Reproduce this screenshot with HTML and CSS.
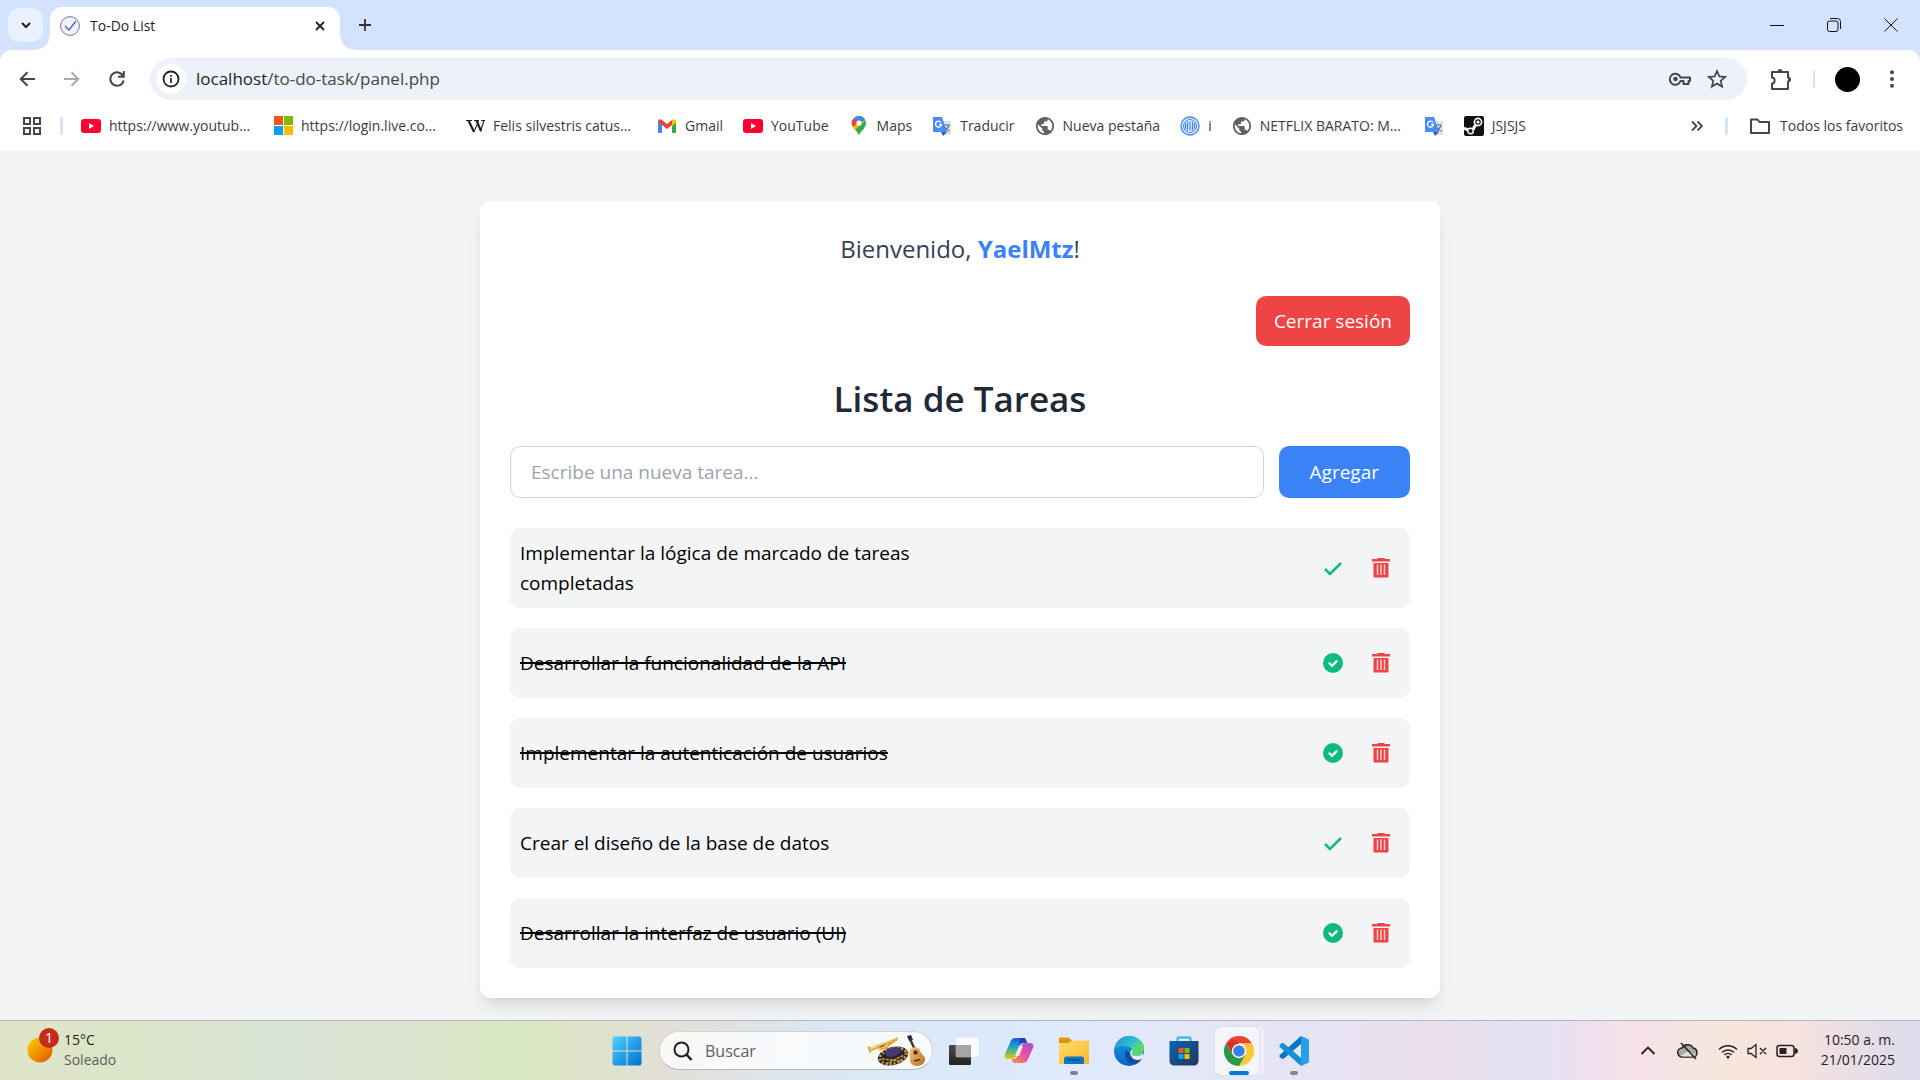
FILE: index.html
```html
<!DOCTYPE html>
<html lang="es">
<head>
<meta charset="utf-8">
<meta name="viewport" content="width=device-width, initial-scale=1">
<title>To-Do List</title>
<link rel="stylesheet" href="styles.css">
</head>
<body>
<svg class="defs" width="0" height="0" aria-hidden="true">
  <defs>
    <linearGradient id="g-sun" x1="0" y1="0" x2="1" y2="1"><stop offset="0" stop-color="#ffd400"/><stop offset="1" stop-color="#e04f00"/></linearGradient>
    <linearGradient id="g-win" x1="0" y1="0" x2="1" y2="1"><stop offset="0" stop-color="#4cd2fe"/><stop offset="1" stop-color="#0070d0"/></linearGradient>
    <linearGradient id="g-dark" x1="0" y1="0" x2="0" y2="1"><stop offset="0" stop-color="#4a4a4a"/><stop offset="1" stop-color="#222"/></linearGradient>
    <linearGradient id="g-cop-a" x1="0" y1="0" x2="0" y2="1"><stop offset="0" stop-color="#1a5be0"/><stop offset=".35" stop-color="#1597dd"/><stop offset=".7" stop-color="#6fbf5a"/><stop offset="1" stop-color="#f2c61c"/></linearGradient>
    <linearGradient id="g-cop-b" x1="1" y1="0" x2="0" y2="1"><stop offset="0" stop-color="#a04ee8"/><stop offset=".5" stop-color="#e8549a"/><stop offset="1" stop-color="#fb8f45"/></linearGradient>
    <linearGradient id="g-fold" x1="0" y1="0" x2="1" y2="1"><stop offset="0" stop-color="#ffdc6e"/><stop offset="1" stop-color="#fbb929"/></linearGradient>
    <linearGradient id="g-edge-a" x1="0" y1=".2" x2="1" y2=".8"><stop offset="0" stop-color="#2795d8"/><stop offset=".5" stop-color="#30c0cf"/><stop offset="1" stop-color="#6ce650"/></linearGradient>
    <linearGradient id="g-edge-b" x1="0" y1="0" x2="0" y2="1"><stop offset="0" stop-color="#1b9de2"/><stop offset="1" stop-color="#0b63c4"/></linearGradient>
    <linearGradient id="g-store" x1="0" y1="0" x2="1" y2="1"><stop offset="0" stop-color="#0b64b5"/><stop offset="1" stop-color="#223659"/></linearGradient>
    <linearGradient id="g-gold" x1="0" y1="0" x2="1" y2="1"><stop offset="0" stop-color="#f6cf7a"/><stop offset="1" stop-color="#b9691f"/></linearGradient>
    <symbol id="i-youtube" viewBox="0 0 20 20"><rect y="3" width="20" height="14" rx="3" fill="#ff0033"/><path d="M8 7l5 3-5 3z" fill="#fff"/></symbol>
    <symbol id="i-globe" viewBox="1 1 22 22"><path fill="#5f6368" d="M12 2C6.480 2 2 6.480 2 12s4.480 10 10 10 10-4.480 10-10S17.520 2 12 2zm-1 17.930c-3.950-.490-7-3.850-7-7.930 0-.620.080-1.210.210-1.790L9 15v1c0 1.100.900 2 2 2v1.930zm6.900-2.540c-.260-.810-1-1.390-1.900-1.390h-1v-3c0-.550-.450-1-1-1H8v-2h2c.550 0 1-.450 1-1V7h2c1.100 0 2-.900 2-2v-.410c2.930 1.190 5 4.060 5 7.410 0 2.080-.800 3.970-2.100 5.390z"/></symbol>
    <symbol id="i-translate" viewBox="0 0 20 20"><path d="M8 5h11v14H11z" fill="#dfe3e8"/><path d="M11 9h7M14.500 8v1M17 9c-1 4-3 5-5 6M13 11c1 2 3 4 5 4" stroke="#607d8b" stroke-width="1.200" fill="none"/><path d="M1 1h9l5 15H2a1 1 0 0 1-1-1z" fill="#4c8bf5"/><path d="M9 16h6l-4 4z" fill="#3957b8"/><path d="M9 6.500A3 3 0 1 0 9.500 8.500H7" stroke="#fff" stroke-width="1.300" fill="none"/></symbol>
    <symbol id="i-check" viewBox="0 0 20 20"><path d="M2 11l5 5L18 5" fill="none" stroke="#10b981" stroke-width="2.600"/></symbol>
    <symbol id="i-done" viewBox="0 0 20 20"><circle cx="10" cy="10" r="10" fill="#10b981"/><path d="M5.800 9.800l3.200 3 5.200-5.200" fill="none" stroke="#fff" stroke-width="2.200"/></symbol>
    <symbol id="i-trash" viewBox="0 0 20 20"><path d="M7 0h6l1 1h5v2.500H1V1h5zM2.500 5h15v13.500a1 1 0 0 1-1 1h-13a1 1 0 0 1-1-1z" fill="#ef4444"/><path d="M6.500 6.500v10.500M10 6.500v10.500M13.500 6.500v10.500" stroke="#f8d5d8" stroke-width="1.400"/></symbol>
  </defs>
</svg>

<header class="browser">
  <div class="tabstrip">
    <button class="tab-search" aria-label="Buscar pestañas"><svg width="12" height="12" viewBox="0 0 12 12"><path d="M2 4l4 4 4-4" fill="none" stroke="#1f1f1f" stroke-width="2"/></svg></button>
    <div class="tab">
      <svg width="20" height="20" viewBox="0 0 20 20"><circle cx="10" cy="10" r="9.400" fill="#f1f2fc" stroke="#77798a" stroke-width="1"/><path d="M5 10l4 4 7-9" fill="none" stroke="#5261b5" stroke-width="1.400"/></svg>
      <span class="tab-title">To-Do List</span>
      <button class="icon-btn" aria-label="Cerrar pestaña"><svg width="12" height="12" viewBox="0 0 12 12"><path d="M2 2l8 8M10 2l-8 8" stroke="#1f1f1f" stroke-width="1.800"/></svg></button>
    </div>
    <button class="icon-btn new-tab" aria-label="Nueva pestaña"><svg width="14" height="14" viewBox="0 0 14 14"><path d="M7 1v12M1 7h12" stroke="#333" stroke-width="1.800"/></svg></button>
    <div class="window-controls">
      <button class="win-btn" aria-label="Minimizar"><svg width="14" height="14" viewBox="0 0 14 14"><path d="M0 7.500h14" stroke="#111"/></svg></button>
      <button class="win-btn" aria-label="Restaurar"><svg width="14" height="14" viewBox="0 0 14 14" fill="none" stroke="#111"><rect x=".5" y="3" width="10.500" height="10.500" rx="2"/><path d="M3 .5h7.500a3 3 0 0 1 3 3V11"/></svg></button>
      <button class="win-btn" aria-label="Cerrar"><svg width="14" height="14" viewBox="0 0 14 14"><path d="M.5.5l13 13M13.500.5l-13 13" stroke="#111"/></svg></button>
    </div>
  </div>

  <div class="toolbar">
    <button class="nav-btn" aria-label="Atrás"><svg width="16" height="16" viewBox="0 0 16 16" fill="none" stroke="#444746" stroke-width="2"><path d="M16 8H2M8.500 1.200L1.700 8l6.800 6.800"/></svg></button>
    <button class="nav-btn" aria-label="Adelante"><svg width="16" height="16" viewBox="0 0 16 16" fill="none" stroke="#aaa" stroke-width="2"><path d="M0 8h14M7.500 1.200L14.300 8l-6.800 6.800"/></svg></button>
    <button class="nav-btn" aria-label="Recargar"><svg width="16" height="16" viewBox="0 0 16 16" fill="none" stroke="#444746" stroke-width="2"><path d="M14 5a6.700 6.700 0 1 0 .6 4.500M14.800 0v5.700H9"/></svg></button>
    <div class="omnibox">
      <button class="site-info" aria-label="Información del sitio"><svg width="18" height="18" viewBox="0 0 18 18"><circle cx="9" cy="9" r="7.500" fill="none" stroke="#1f1f1f" stroke-width="1.800"/><path d="M9 8v5M9 5v1.700" stroke="#1f1f1f" stroke-width="1.700"/></svg></button>
      <div class="url"><span class="url-host">localhost</span>/to-do-task/panel.php</div>
      <button class="icon-btn" aria-label="Contraseñas"><svg width="24" height="16" viewBox="0 0 24 16" fill="none" stroke="#444746" stroke-width="2"><path d="M12.500 6.500H22v3.500h-1.500V13h-5v-3h-3a5.500 5.500 0 1 1 0-3.500z" stroke-linejoin="round"/><circle cx="7.500" cy="8" r="2.300" fill="#444746" stroke="none"/></svg></button>
      <button class="icon-btn" aria-label="Añadir a favoritos"><svg width="20" height="20" viewBox="0 0 20 20"><path d="M10 2l2.300 5.400 5.900.5-4.500 3.900 1.400 5.800L10 14.500l-5.100 3.100 1.400-5.800L1.800 7.900l5.900-.5z" fill="none" stroke="#444746" stroke-width="1.700"/></svg></button>
    </div>
    <button class="icon-btn" aria-label="Extensiones"><svg width="24" height="24" viewBox="0 0 24 24"><path d="M3 5h16v5.500c2 0 2 4 0 4V22H3v-5.500c3.500 0 3.500-6 0-6z" fill="none" stroke="#444746" stroke-width="2" stroke-linejoin="round"/><path d="M8.500 5a2.500 3 0 0 1 5 0zM19 10a3 2.500 0 0 1 0 5z" fill="#444746"/></svg></button>
    <span class="divider"></span>
    <button class="avatar" aria-label="Perfil"></button>
    <button class="icon-btn menu-dots" aria-label="Menú"><svg width="6" height="18" viewBox="0 0 6 18" fill="#444746"><circle cx="3" cy="2.300" r="2"/><circle cx="3" cy="9" r="2"/><circle cx="3" cy="15.700" r="2"/></svg></button>
  </div>

  <nav class="bookmarks" aria-label="Favoritos">
    <button class="icon-btn" aria-label="Aplicaciones"><svg width="20" height="20" viewBox="0 0 20 20" fill="none" stroke="#444746" stroke-width="2"><path d="M2 2h6v6H2zM12 2h6v6h-6zM2 12h6v6H2zM12 12h6v6h-6z"/></svg></button>
    <span class="divider"></span>
    <a class="bookmark" href="#"><svg width="20" height="20"><use href="#i-youtube"/></svg><span class="label-long">https://www.youtub...</span></a>
    <a class="bookmark" href="#"><svg width="20" height="20" viewBox="0 0 20 20"><path d="M1 0h9v9H1z" fill="#f65314"/><path d="M11 0h9v9h-9z" fill="#7cbb00"/><path d="M1 10h9v9H1z" fill="#00a1f1"/><path d="M11 10h9v9h-9z" fill="#ffbb00"/></svg><span class="label-long">https://login.live.co...</span></a>
    <a class="bookmark" href="#"><svg width="20" height="20" viewBox="0 0 20 20" fill="none" stroke="#222"><path d="M3.500 4.500L9 16M11.500 4.500L16 15" stroke-width="2.200"/><path d="M9 15.500l4.500-10M15.500 15.500l3.500-11M1 4.500h6M9 4.500h5M16 4.500h4" stroke-width="1.100"/></svg><span class="label-long">Felis silvestris catus...</span></a>
    <a class="bookmark" href="#"><svg width="20" height="20" viewBox="0 0 20 20"><path d="M1 6v10a1 1 0 0 0 1 1h3V8z" fill="#4285f4"/><path d="M19 6v10a1 1 0 0 1-1 1h-3V8z" fill="#34a853"/><path d="M1 5.500C1 3 3.500 2.500 5 4l5 4 5-4v5l-5 4-5-4-4-3z" fill="#ea4335"/><path d="M15 4c1.500-1.500 4-1 4 1.500V7l-4 3z" fill="#fbbc04"/></svg>Gmail</a>
    <a class="bookmark" href="#"><svg width="20" height="20"><use href="#i-youtube"/></svg>YouTube</a>
    <a class="bookmark" href="#"><svg width="20" height="20" viewBox="0 0 20 20"><path d="M10 20c-.7-5-7-7-7-13a7 7 0 0 1 14 0c0 6-6.300 8-7 13z" fill="#34a853"/><path d="M4.600 2.500A7 7 0 0 1 15.400 2.500L10 7z" fill="#4285f4"/><path d="M4.600 2.500A7 7 0 0 0 4 11l6-4z" fill="#ea4335"/><path d="M4 10.500c.7 1.400 1.500 2.200 2.300 3.200L16.500 4 10 7z" fill="#fbbc04"/><circle cx="10" cy="7" r="2.600" fill="#fff"/></svg>Maps</a>
    <a class="bookmark" href="#"><svg width="20" height="20"><use href="#i-translate"/></svg>Traducir</a>
    <a class="bookmark" href="#"><svg width="20" height="20"><use href="#i-globe"/></svg>Nueva pestaña</a>
    <a class="bookmark" href="#"><svg width="20" height="20" viewBox="0 0 20 20" fill="none" stroke="#3b82f6"><circle cx="10" cy="10" r="9" fill="#e3eefe" stroke-width="1.300"/><circle cx="10" cy="10" r="6.500"/><path d="M7.500 5.500v9M10 5.500v9M12.500 5.500v9M5.500 7v6M14.500 7v6" stroke-width="1.200"/></svg>i</a>
    <a class="bookmark" href="#"><svg width="20" height="20"><use href="#i-globe"/></svg><span class="label-long">NETFLIX BARATO: M...</span></a>
    <a class="bookmark" href="#" aria-label="Traductor"><svg width="20" height="20"><use href="#i-translate"/></svg></a>
    <a class="bookmark" href="#"><svg width="20" height="20" viewBox="0 0 20 20"><rect width="20" height="20" rx="2" fill="#111"/><circle cx="14" cy="6" r="3.600" fill="none" stroke="#fff" stroke-width="1.600"/><circle cx="14" cy="6" r="1.600" fill="#fff"/><path d="M11.500 9L9 13.500M0 12l6 3" stroke="#fff" stroke-width="3"/><circle cx="6.500" cy="15" r="2.800" fill="#111" stroke="#fff" stroke-width="1.400"/></svg>JSJSJS</a>
    <div class="bookmarks-end">
      <button class="icon-btn" aria-label="Más favoritos"><svg width="12" height="12" viewBox="0 0 12 12" fill="none" stroke="#444746" stroke-width="1.800"><path d="M1 1.500L5.500 6 1 10.500M6.500 1.500L11 6l-4.500 4.500"/></svg></button>
      <span class="divider"></span>
      <a class="bookmark all-bookmarks" href="#"><svg width="20" height="20" viewBox="0 0 20 20"><path d="M1 3.500h6.500l2 2.500H19v11H1z" fill="none" stroke="#444746" stroke-width="2" stroke-linejoin="round"/></svg>Todos los favoritos</a>
    </div>
  </nav>
</header>

<main class="page">
  <section class="card">
    <p class="welcome">Bienvenido, <strong class="user">YaelMtz</strong>!</p>
    <div class="session"><button class="btn btn-danger">Cerrar sesión</button></div>
    <h1 class="title">Lista de Tareas</h1>
    <form class="new-task">
      <input class="task-input" type="text" placeholder="Escribe una nueva tarea..." aria-label="Nueva tarea">
      <button class="btn btn-primary" type="button">Agregar</button>
    </form>
    <ul class="tasks">
      <li class="task">
        <span class="task-text">Implementar la lógica de marcado de tareas completadas</span>
        <button class="task-btn" aria-label="Completar"><svg width="20" height="20"><use href="#i-check"/></svg></button>
        <button class="task-btn" aria-label="Eliminar"><svg width="20" height="20"><use href="#i-trash"/></svg></button>
      </li>
      <li class="task">
        <span class="task-text is-done">Desarrollar la funcionalidad de la API</span>
        <button class="task-btn" aria-label="Desmarcar"><svg width="20" height="20"><use href="#i-done"/></svg></button>
        <button class="task-btn" aria-label="Eliminar"><svg width="20" height="20"><use href="#i-trash"/></svg></button>
      </li>
      <li class="task">
        <span class="task-text is-done">Implementar la autenticación de usuarios</span>
        <button class="task-btn" aria-label="Desmarcar"><svg width="20" height="20"><use href="#i-done"/></svg></button>
        <button class="task-btn" aria-label="Eliminar"><svg width="20" height="20"><use href="#i-trash"/></svg></button>
      </li>
      <li class="task">
        <span class="task-text">Crear el diseño de la base de datos</span>
        <button class="task-btn" aria-label="Completar"><svg width="20" height="20"><use href="#i-check"/></svg></button>
        <button class="task-btn" aria-label="Eliminar"><svg width="20" height="20"><use href="#i-trash"/></svg></button>
      </li>
      <li class="task">
        <span class="task-text is-done">Desarrollar la interfaz de usuario (UI)</span>
        <button class="task-btn" aria-label="Desmarcar"><svg width="20" height="20"><use href="#i-done"/></svg></button>
        <button class="task-btn" aria-label="Eliminar"><svg width="20" height="20"><use href="#i-trash"/></svg></button>
      </li>
    </ul>
  </section>
</main>

<footer class="taskbar">
  <div class="weather">
    <div class="weather-icon">
      <svg width="26" height="26" viewBox="0 0 26 26"><circle cx="13" cy="13" r="12.500" fill="url(#g-sun)"/></svg>
      <span class="badge">1</span>
    </div>
    <div class="weather-text"><span>15°C</span><span class="muted">Soleado</span></div>
  </div>
  <div class="apps">
    <button class="app" aria-label="Inicio"><svg width="30" height="30" viewBox="0 0 30 30" fill="url(#g-win)"><path d="M2 .5h12.500v14H.5V2zM15.500.5H28L29.500 2v12.500h-14zM.5 15.500h14v14H2L.5 28zM15.500 15.500h14V28L28 29.500H15.500z"/></svg></button>
    <div class="search">
      <svg width="20" height="20" viewBox="0 0 20 20" fill="none" stroke="#222" stroke-width="2"><circle cx="8.500" cy="8.500" r="7"/><path d="M13.500 13.500l5 5.500" stroke-width="2.600"/></svg>
      <input class="search-input" type="text" placeholder="Buscar" aria-label="Buscar">
      <svg width="60" height="32" viewBox="0 0 60 32">
        <path d="M1 11l3 8 1.500-3L12 13.500l2 2 7-2 3-3 7-5 1-3.500-2 .5L22 6l-9 3-8 3.500z" fill="#e2a63c"/><path d="M4 14l26-11M13 13.500l9-3.500" stroke="#fbe29a" stroke-width="1.200"/><path d="M13 11.500l6-2.500v2l-5 2z" fill="#a86d1e"/>
        <ellipse cx="27" cy="21" rx="15.500" ry="9" transform="rotate(-14 27 21)" fill="#2b2420"/>
        <ellipse cx="27" cy="21" rx="13.500" ry="7.500" transform="rotate(-14 27 21)" fill="none" stroke="#c79a4c" stroke-width="3" stroke-dasharray="2 2"/>
        <ellipse cx="27" cy="17" rx="8" ry="4.500" transform="rotate(-14 27 17)" fill="#473a72"/><path d="M16 24l20 2M20 29l18-9" stroke="#c79a4c" stroke-width="1.500" stroke-dasharray="3 1"/>
        <path d="M44 4l6 13" stroke="#4a3327" stroke-width="2.400"/><path d="M41 1l4-1 2 5-4 1z" fill="#2b2b30"/><path d="M44 15c2-4 9-3 10 0 0 3 4 5 5 8 1 5-4 8-8 8-5 0-8-4-7-8 0-3-2-5 0-8z" fill="url(#g-gold)"/><circle cx="49.500" cy="17.500" r="2.200" fill="#5b331b"/><path d="M48 26l6-1.500" stroke="#5b331b" stroke-width="1.500"/>
      </svg>
    </div>
    <button class="app" aria-label="Vista de tareas"><svg width="32" height="30" viewBox="0 0 32 30"><rect x="1" y="9" width="22" height="20" rx="1" fill="url(#g-dark)"/><rect x="8" y="1" width="23" height="20" rx="1" fill="#fff" fill-opacity=".8" stroke="#ddd" stroke-width=".5"/><path d="M8 9h15v12H8z" fill="#888" fill-opacity=".65"/></svg></button>
    <button class="app" aria-label="Copilot"><svg width="30" height="30" viewBox="0 0 30 30"><path d="M6 7c1-4 3-5 6-5h7c3 0 3 2 4 5h-4c-2 0-3 1-4 4l-3 9c-1 2-2 3-4 3H4c-3 0-4-2-3-5z" fill="url(#g-cop-a)"/><path d="M16 2h3c3 0 3 2 4 5h-4c-2 0-3 1-4 3z" fill="#1b45b8"/><path d="M24 23c-1 3-3 4-6 4h-6c-3 0-4-1-4-4h2c2 0 3-2 4-5l3-8c1-2 2-3 4-3h5c3 0 4 2 3 5z" fill="url(#g-cop-b)"/><path d="M15 10h4l-4 10h-4z" fill="#e7edfa"/></svg></button>
    <button class="app is-open" aria-label="Explorador de archivos"><svg width="30" height="30" viewBox="0 0 30 30"><path d="M0 3a1.500 1.500 0 0 1 1.500-1.500h8L13 4.500V9H0z" fill="#d9980f"/><path d="M0 7h9l4-2.500h17V28H0z" fill="url(#g-fold)"/><path d="M5 28v-5a2.500 2.500 0 0 1 2.500-2.500h15A2.500 2.500 0 0 1 25 23v5z" fill="#0f75c5"/><path d="M8.500 24h13" stroke="#0a4a8c" stroke-width="1.300"/></svg></button>
    <button class="app" aria-label="Edge"><svg width="30" height="30" viewBox="0 0 30 30"><circle cx="15" cy="15" r="15" fill="url(#g-edge-b)"/><path d="M1 13C2 5 8 0 15 0c9 0 15 6 15 12 0 5-4 8-8 8-3 0-5-1-5-2 2-1 2-3 1-5-2-3-12-5-17 0z" fill="url(#g-edge-a)"/><path d="M12 14c-3 6 1 14 9 14 4-1 7-5 7-6-3 1-9 2-11-3-1-2-3-4-5-5z" fill="#114f9c"/><path d="M18 13c2 4-2 5 0 6 4 2 9 1 11-2l1 5-2 1c-5 2-9 1-11-3-2-3 0-5 1-7z" fill="#e6e9f7"/><path d="M18 12c3 4-1 5 0 6 4 3 12 0 12-6 0-3-3-5-3-5z" fill="#56d86f"/></svg></button>
    <button class="app" aria-label="Microsoft Store"><svg width="30" height="30" viewBox="0 0 30 30"><path d="M8.500 6V2.500a1 1 0 0 1 1-1h11a1 1 0 0 1 1 1V6" fill="none" stroke="#21b8ec" stroke-width="2"/><path d="M.5 5h29v20a4.500 4.500 0 0 1-4.500 4.500H5A4.500 4.500 0 0 1 .5 25z" fill="url(#g-store)"/><path d="M9.500 12h5v5h-5z" fill="#f65320"/><path d="M15.500 12h5v5h-5z" fill="#7fba00"/><path d="M9.500 18h5v5h-5z" fill="#00a4ef"/><path d="M15.500 18h5v5h-5z" fill="#ffb900"/></svg></button>
    <button class="app is-active" aria-label="Chrome"><svg width="30" height="30" viewBox="0 0 30 30"><path d="M2 7.500A15 15 0 0 1 28 7.500H15z" fill="#ea4335"/><path d="M15 30A15 15 0 0 0 28 7.500H15l6.500 11.200z" fill="#fcc934"/><path d="M2 7.500l7 12 6-3V7.500l-5-4z" fill="#d93025"/><path d="M2 7.500A15 15 0 0 0 15 30l6.500-11.300-13 0z" fill="#2a9a48"/><circle cx="15" cy="15" r="7.200" fill="#fff"/><circle cx="15" cy="15" r="5.800" fill="#3b7ded"/></svg></button>
    <button class="app is-open" aria-label="Visual Studio Code"><svg width="30" height="30" viewBox="0 0 30 30"><path d="M22 8L5 22.500l-2 .5-2.500-2 .2-2L22 0z" fill="#0a78bd"/><path d="M22 22L5 7.500 3 7 .5 9l.2 2L22 30z" fill="#1490d8"/><path d="M22 0l7 3a1.500 1.500 0 0 1 1 1.500v21a1.500 1.500 0 0 1-1 1.500l-7 3z" fill="#27a0ec"/></svg></button>
  </div>
  <div class="tray">
    <svg width="16" height="16" viewBox="0 0 16 16"><path d="M1.500 11L8 4.500l6.500 6.500" fill="none" stroke="#222" stroke-width="1.800"/></svg>
    <svg class="tray-cloud" width="22" height="18" viewBox="0 0 22 18"><path d="M5.500 15a4.500 4.500 0 0 1-.5-9c2-4 9-4.500 11 0a4.600 4.600 0 0 1 .5 9z" fill="#a9a9a9" stroke="#222" stroke-width="1.500"/><path d="M3 14l9-5 7 4-2 1.500H6z" fill="#e9e2dc"/><path d="M4 1l15 16" stroke="#222" stroke-width="1.600"/></svg>
    <div class="tray-status">
      <svg width="20" height="16" viewBox="0 0 20 16" fill="none" stroke="#222" stroke-width="1.500"><path d="M1 6.500a12.500 12.500 0 0 1 18 0M4 9.500a8.500 8.500 0 0 1 12 0M6.500 12a5 5 0 0 1 7 0"/><circle cx="10" cy="14" r="1.500" fill="#222" stroke="none"/></svg>
      <svg width="20" height="16" viewBox="0 0 20 16" fill="none" stroke="#222" stroke-width="1.300"><path d="M1 5.500h3L9 1.500v13l-5-4H1zM13 5l6 6M19 5l-6 6"/></svg>
      <svg width="22" height="14" viewBox="0 0 22 14"><rect x="1" y="1.500" width="17" height="11" rx="2.500" fill="none" stroke="#222" stroke-width="1.500"/><path d="M3.500 4h7v6h-7z" fill="#222"/><path d="M19 4.500a2.500 2.500 0 0 1 0 5z" fill="#222" stroke="#222"/></svg>
    </div>
    <div class="clock"><span>10:50 a. m.</span><span>21/01/2025</span></div>
  </div>
</footer>
</body>
</html>
```
FILE: styles.css
```css
*, *::before, *::after { box-sizing: border-box; }

body {
  margin: 0;
  min-height: 100vh;
  display: flex;
  flex-direction: column;
  background: #f3f4f6;
  color: #000;
  font-family: "Open Sans", "Noto Sans", sans-serif;
  font-size: 19px;
  line-height: 30px;
}

button, input { font: inherit; color: inherit; }
button { border: 0; padding: 0; background: none; cursor: pointer; }
svg { display: block; flex: none; }
.defs { position: absolute; }

/* Browser window */
.browser { background: #d3e3fd; }

.tabstrip {
  display: flex;
  align-items: center;
  height: 50px;
  padding: 0 1px 0 8px;
}

.tab-search {
  display: grid;
  place-items: center;
  width: 35px;
  height: 34px;
  border-radius: 12px;
  background: #e9f1fe;
}

.tab {
  position: relative;
  display: flex;
  align-items: center;
  align-self: flex-end;
  gap: 10px;
  width: 290px;
  height: 43px;
  margin-left: 7px;
  padding: 0 14px 6px 10px;
  border-radius: 12px 12px 0 0;
  background: #fff;
  font-size: 14px;
  line-height: 20px;
}

.tab::before, .tab::after {
  content: "";
  position: absolute;
  bottom: 0;
  width: 14px;
  height: 14px;
}
.tab::before { right: 100%; background: radial-gradient(circle at 0 0, transparent 13px, #fff 14px); }
.tab::after { left: 100%; background: radial-gradient(circle at 100% 0, transparent 13px, #fff 14px); }
.tab-title { flex: 1; color: #1f1f1f; }

.icon-btn { display: grid; place-items: center; flex: none; }
.new-tab { margin-left: 18px; }
.window-controls { display: flex; margin-left: auto; }
.win-btn { display: grid; place-items: center; width: 57px; height: 48px; }

.toolbar {
  display: flex;
  align-items: center;
  height: 58px;
  padding: 0 25px 0 7px;
  border-radius: 12px 12px 0 0;
  background: #fff;
}

.nav-btn { display: grid; place-items: center; width: 40px; height: 40px; margin-right: 5px; }

.omnibox {
  display: flex;
  align-items: center;
  flex: 1;
  gap: 15px;
  height: 42px;
  margin: 0 22px 0 8px;
  padding: 0 20px 0 6px;
  border-radius: 21px;
  background: #ecf1fa;
}

.site-info {
  display: grid;
  place-items: center;
  width: 30px;
  height: 30px;
  border-radius: 50%;
  background: #fff;
}
.url { flex: 1; margin-left: -5px; color: #474747; font-size: 17px; }
.url-host { color: #1f1f1f; }

.divider { flex: none; width: 3px; height: 18px; border-radius: 2px; background: #d3e3fd; }
.toolbar .divider { width: 2px; margin-left: 20px; }
.avatar { width: 25px; height: 25px; margin-left: 20px; border-radius: 50%; background: #000; }
.menu-dots { margin-left: 29px; }

.bookmarks {
  display: flex;
  align-items: center;
  gap: 20px;
  height: 43px;
  padding: 0 17px 8px 22px;
  background: #fff;
  color: #3c3c3c;
  font-size: 14px;
  line-height: 20px;
  white-space: nowrap;
}
.bookmarks .divider { margin: 0 -2px; }
.bookmark { display: flex; align-items: center; gap: 8px; color: inherit; text-decoration: none; }
.label-long { width: 144px; }
.bookmarks-end { display: flex; align-items: center; gap: 24px; margin-left: auto; }
.all-bookmarks { gap: 10px; }

/* Task panel */
.page { flex: 1; padding: 50px 20px 20px; }

.card {
  max-width: 960px;
  margin: 0 auto;
  padding: 30px;
  border-radius: 10px;
  background: #fff;
  box-shadow: 0 12px 19px -4px rgba(0, 0, 0, .1), 0 5px 8px -5px rgba(0, 0, 0, .1);
}

.welcome {
  margin: 0 0 30px;
  color: #374151;
  font-size: 24px;
  line-height: 35px;
  text-align: center;
}
.user { color: #3b82f6; font-weight: 700; }

.session { display: flex; justify-content: flex-end; }
.btn { padding: 10px 18px; border-radius: 10px; color: #fff; white-space: nowrap; }
.btn-danger { background: #ef4444; }
.btn-primary { padding: 10px 31px; background: #3b82f6; }

.title {
  margin: 30px 0 25px;
  color: #1f2937;
  font-size: 35px;
  font-weight: 600;
  line-height: 45px;
  text-align: center;
}

.new-task { display: flex; gap: 15px; }
.task-input {
  flex: 1;
  min-width: 0;
  height: 52px;
  padding: 10px 20px;
  border: 1px solid #d1d5db;
  border-radius: 10px;
  background: #fff;
}
.task-input::placeholder { color: #9ca3af; }

.tasks { display: grid; gap: 20px; margin: 30px 0 0; padding: 0; list-style: none; }
.task {
  display: flex;
  align-items: center;
  gap: 10px;
  padding: 10px;
  border-radius: 10px;
  background: #f3f4f6;
}
.task-text { max-width: 60%; flex: 0 1 430px; margin-right: auto; }
.is-done { text-decoration: line-through 2px; }
.task-btn { display: grid; place-items: center; width: 38px; height: 50px; }

/* Taskbar */
.taskbar {
  display: grid;
  grid-template-columns: 1fr auto 1fr;
  align-items: center;
  height: 60px;
  border-top: 1px solid #b3b4b8;
  background: linear-gradient(90deg, #dfe5c8 0%, #dce5c9 7%, #d9e3d5 15%, #dce3d0 21%, #d8e7c0 27%, #dfe2cb 31%, #e2dfd8 35%, #dce7f0 42%, #dbe9fb 50%, #dfe9fa 56%, #e4e6f6 64%, #ebdfee 75%, #e2e3f3 80%, #f0dff0 83%, #f5e1e8 85%, #f7e6dc 90%, #f5e1df 94%, #e3dde9 98%, #e0dcec 100%);
  font-size: 14px;
  line-height: 20px;
}

.weather { display: flex; align-items: center; gap: 11px; padding: 0 0 2px 27px; color: #222; }
.weather-icon { position: relative; }
.badge {
  position: absolute;
  left: 12px;
  top: -9px;
  width: 20px;
  height: 20px;
  border-radius: 50%;
  background: #c42b1c;
  color: #fff;
  font-size: 14px;
  line-height: 20px;
  text-align: center;
}
.weather-text, .clock { display: flex; flex-direction: column; }
.muted { color: #5c5d58; }

.apps { display: flex; align-items: center; }
.app {
  position: relative;
  display: grid;
  place-items: center;
  width: 55px;
  height: 48px;
}
.is-open::after, .is-active::after {
  content: "";
  position: absolute;
  left: 50%;
  bottom: 0;
  width: 8px;
  height: 4px;
  margin-left: -4px;
  border-radius: 2px;
  background: #858589;
}
.is-active::after { width: 20px; margin-left: -10px; background: #0078d4; }
.is-active::before {
  content: "";
  position: absolute;
  inset: 0 7px 0 4px;
  border-radius: 5px;
  background: rgba(255, 255, 255, .6);
  box-shadow: 0 0 1px rgba(0, 0, 0, .3), 5px 0 0 rgba(255, 255, 255, .35);
}
.is-active svg { position: relative; }

.search {
  display: flex;
  align-items: center;
  gap: 12px;
  width: 274px;
  height: 39px;
  margin: 0 3px 0 5px;
  padding: 0 6px 0 13px;
  border: 1px solid #d0d3d6;
  border-bottom-color: #b4b8bd;
  border-radius: 20px;
  background: rgba(255, 255, 255, .78);
}
.search-input { flex: 1; min-width: 0; padding: 0; border: 0; outline: 0; background: none; font-size: 16px; }
.search-input::placeholder { color: #606060; }

.tray { display: flex; align-items: center; justify-content: flex-end; padding-right: 25px; color: #222; }
.tray-cloud { margin: 0 19px 0 21px; }
.tray-status { display: flex; align-items: center; gap: 9px; }
.clock { width: 78px; margin-left: 19px; padding-bottom: 2px; text-align: right; white-space: nowrap; align-items: flex-end; }
```
